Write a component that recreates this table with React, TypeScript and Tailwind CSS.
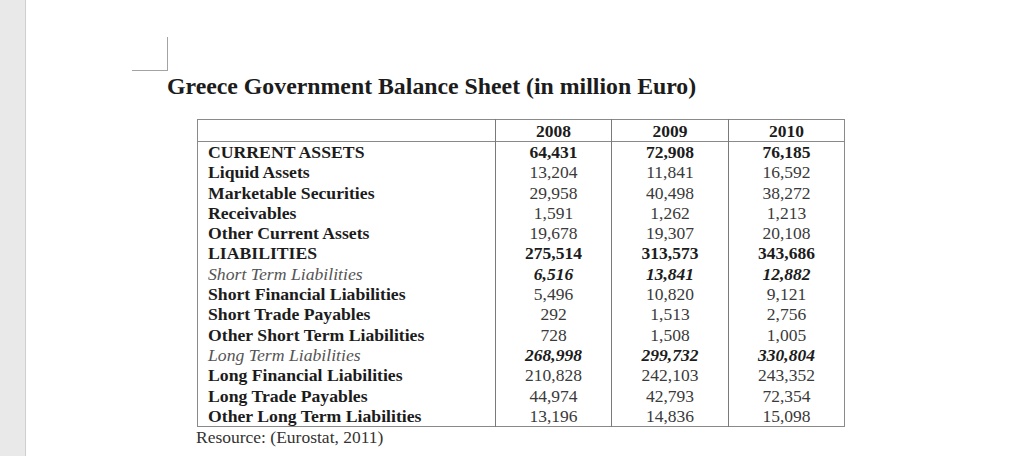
type RowKind = 'total' | 'sub' | 'item';

interface Row {
  label: string;
  values: string[];
  kind: RowKind;
}

const years = ['2008', '2009', '2010'];

const rows: Row[] = [
  { label: 'CURRENT ASSETS', values: ['64,431', '72,908', '76,185'], kind: 'total' },
  { label: 'Liquid Assets', values: ['13,204', '11,841', '16,592'], kind: 'item' },
  { label: 'Marketable Securities', values: ['29,958', '40,498', '38,272'], kind: 'item' },
  { label: 'Receivables', values: ['1,591', '1,262', '1,213'], kind: 'item' },
  { label: 'Other Current Assets', values: ['19,678', '19,307', '20,108'], kind: 'item' },
  { label: 'LIABILITIES', values: ['275,514', '313,573', '343,686'], kind: 'total' },
  { label: 'Short Term Liabilities', values: ['6,516', '13,841', '12,882'], kind: 'sub' },
  { label: 'Short Financial Liabilities', values: ['5,496', '10,820', '9,121'], kind: 'item' },
  { label: 'Short Trade Payables', values: ['292', '1,513', '2,756'], kind: 'item' },
  { label: 'Other Short Term Liabilities', values: ['728', '1,508', '1,005'], kind: 'item' },
  { label: 'Long Term Liabilities', values: ['268,998', '299,732', '330,804'], kind: 'sub' },
  { label: 'Long Financial Liabilities', values: ['210,828', '242,103', '243,352'], kind: 'item' },
  { label: 'Long Trade Payables', values: ['44,974', '42,793', '72,354'], kind: 'item' },
  { label: 'Other Long Term Liabilities', values: ['13,196', '14,836', '15,098'], kind: 'item' },
];

// label cell style per row kind
const labelClass: Record<RowKind, string> = {
  total: 'font-bold text-[#1c1c1c]',
  item: 'font-bold text-[#1c1c1c]',
  sub: 'italic font-normal text-[#555555]',
};

// number cell style per row kind
const valueClass: Record<RowKind, string> = {
  total: 'font-bold text-[#1c1c1c]',
  item: 'font-normal text-[#3a3a3a]',
  sub: 'font-bold italic text-[#1c1c1c]',
};

function BalanceTable() {
  return (
    <table className="w-[647px] table-fixed border-collapse border border-[#8a8a8a] text-[17.5px]">
      <colgroup>
        <col className="w-[298px]" />
        <col className="w-[116px]" />
        <col className="w-[117px]" />
        <col className="w-[116px]" />
      </colgroup>
      <thead>
        <tr className="border-b border-[#8a8a8a]">
          <th className="p-0" />
          {years.map((year) => (
            <th
              key={year}
              className="h-[21px] border-l border-[#7a7a7a] p-0 pt-[2px] text-center align-top font-bold leading-[19px] text-[#1c1c1c]"
            >
              {year}
            </th>
          ))}
        </tr>
      </thead>
      <tbody>
        {rows.map((row) => (
          <tr key={row.label}>
            <td className={`h-[20.3px] p-0 pl-[10px] pt-[1px] align-top text-[17.7px] leading-[19.3px] whitespace-nowrap ${labelClass[row.kind]}`}>
              {row.label}
            </td>
            {row.values.map((value, i) => (
              <td
                key={i}
                className={`h-[20.3px] border-l border-[#7a7a7a] p-0 pt-[1px] text-center align-top leading-[19.3px] ${valueClass[row.kind]}`}
              >
                {value}
              </td>
            ))}
          </tr>
        ))}
      </tbody>
    </table>
  );
}

export default function App() {
  return (
    <div className="flex h-[456px] w-full overflow-hidden bg-white font-['Liberation_Serif','Times_New_Roman',serif]">
      <div className="w-[26px] shrink-0 border-r border-[#cfcfcf] bg-[#e9e9e9]" />
      <div className="flex flex-1 flex-col">
        {/* page margin marker */}
        <div className="ml-[106px] mt-[37px] h-[34px] w-[36px] border-b border-r border-[#a3a3a3]" />
        <h1 className="ml-[141px] mt-[2px] text-[23.8px] font-bold leading-[27px] text-[#1c1c1c]">
          Greece Government Balance Sheet (in million Euro)
        </h1>
        <div className="ml-[171px] mt-[19px]">
          <BalanceTable />
        </div>
        <p className="ml-[170px] mt-[1px] text-[17.5px] leading-[19px] text-[#333333]">
          Resource: (Eurostat, 2011)
        </p>
      </div>
    </div>
  );
}
